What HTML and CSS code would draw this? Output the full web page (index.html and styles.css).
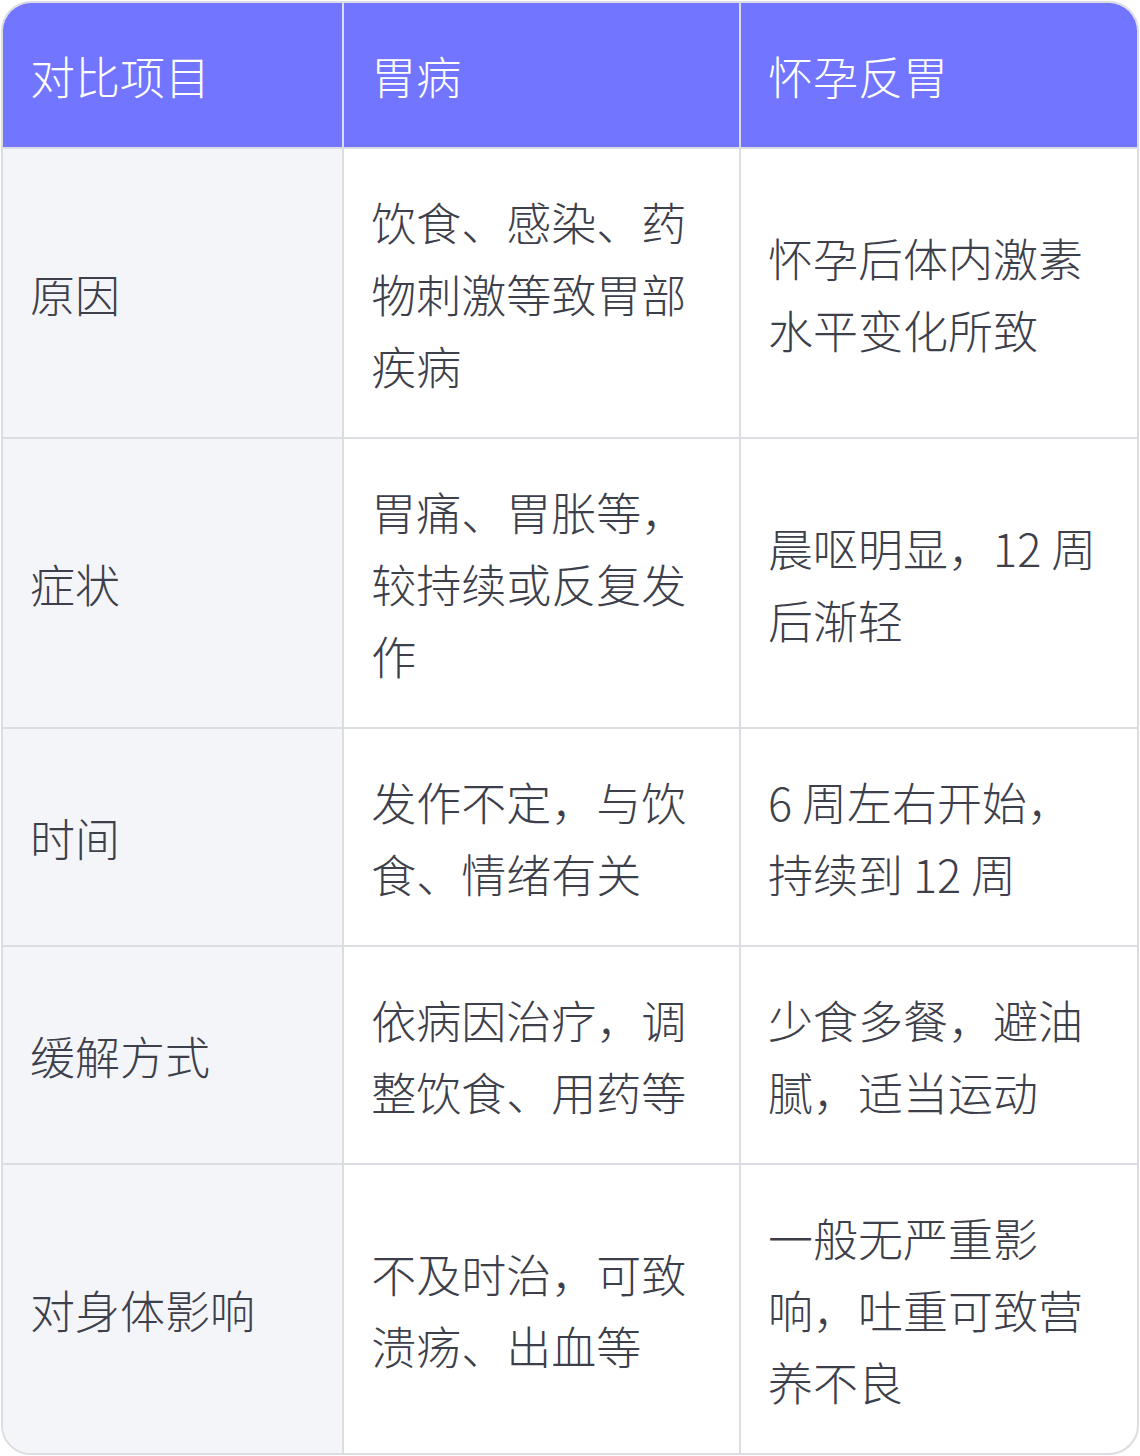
FILE: index.html
```html
<!DOCTYPE html>
<html lang="zh-CN">
<head>
<meta charset="utf-8">
<link rel="stylesheet" href="styles.css">
</head>
<body>
<div class="wrap">
<table class="cmp">
<colgroup><col class="c1"><col class="c2"><col class="c3"></colgroup>
<thead>
<tr><th>对比项目</th><th>胃病</th><th>怀孕反胃</th></tr>
</thead>
<tbody>
<tr><td>原因</td><td>饮食、感染、药物刺激等致胃部疾病</td><td>怀孕后体内激素水平变化所致</td></tr>
<tr><td>症状</td><td>胃痛、胃胀等，较持续或反复发作</td><td>晨呕明显，12 周后渐轻</td></tr>
<tr><td>时间</td><td>发作不定，与饮食、情绪有关</td><td>6 周左右开始，持续到 12 周</td></tr>
<tr><td>缓解方式</td><td>依病因治疗，调整饮食、用药等</td><td>少食多餐，避油腻，适当运动</td></tr>
<tr><td>对身体影响</td><td>不及时治，可致溃疡、出血等</td><td>一般无严重影响，吐重可致营养不良</td></tr>
</tbody>
</table>
</div>
</body>
</html>
```

FILE: styles.css
```css
html, body {
  margin: 0;
  padding: 0;
  background: #ffffff;
}
body {
  padding: 1px 1px 0 1px;
}
.wrap {
  width: 1134px;
  border: 2px solid #dcdde2;
  border-radius: 30px;
  overflow: hidden;
  background: #ffffff;
}
.cmp {
  width: 100%;
  border-collapse: collapse;
  table-layout: fixed;
  font-family: "Noto Sans CJK SC", "Noto Sans", sans-serif;
  font-weight: 300;
  font-size: 45px;
  line-height: 72px;
  color: #3d404b;
}
.c1 { width: 30%; }
.c2 { width: 35%; }
.c3 { width: 35%; }
.cmp th, .cmp td {
  padding: 37px 26px 35px 27px;
  text-align: left;
  vertical-align: middle;
  border: 2px solid #dcdde2;
  font-weight: 300;
}
.cmp tr > :first-child { border-left: none; }
.cmp tr > :last-child { border-right: none; }
.cmp thead th { border-top: none; }
.cmp tbody tr:last-child td { border-bottom: none; }
.cmp th {
  background: #7175ff;
  color: #ffffff;
}
.cmp td:first-child {
  background: #f4f5f9;
}
```
